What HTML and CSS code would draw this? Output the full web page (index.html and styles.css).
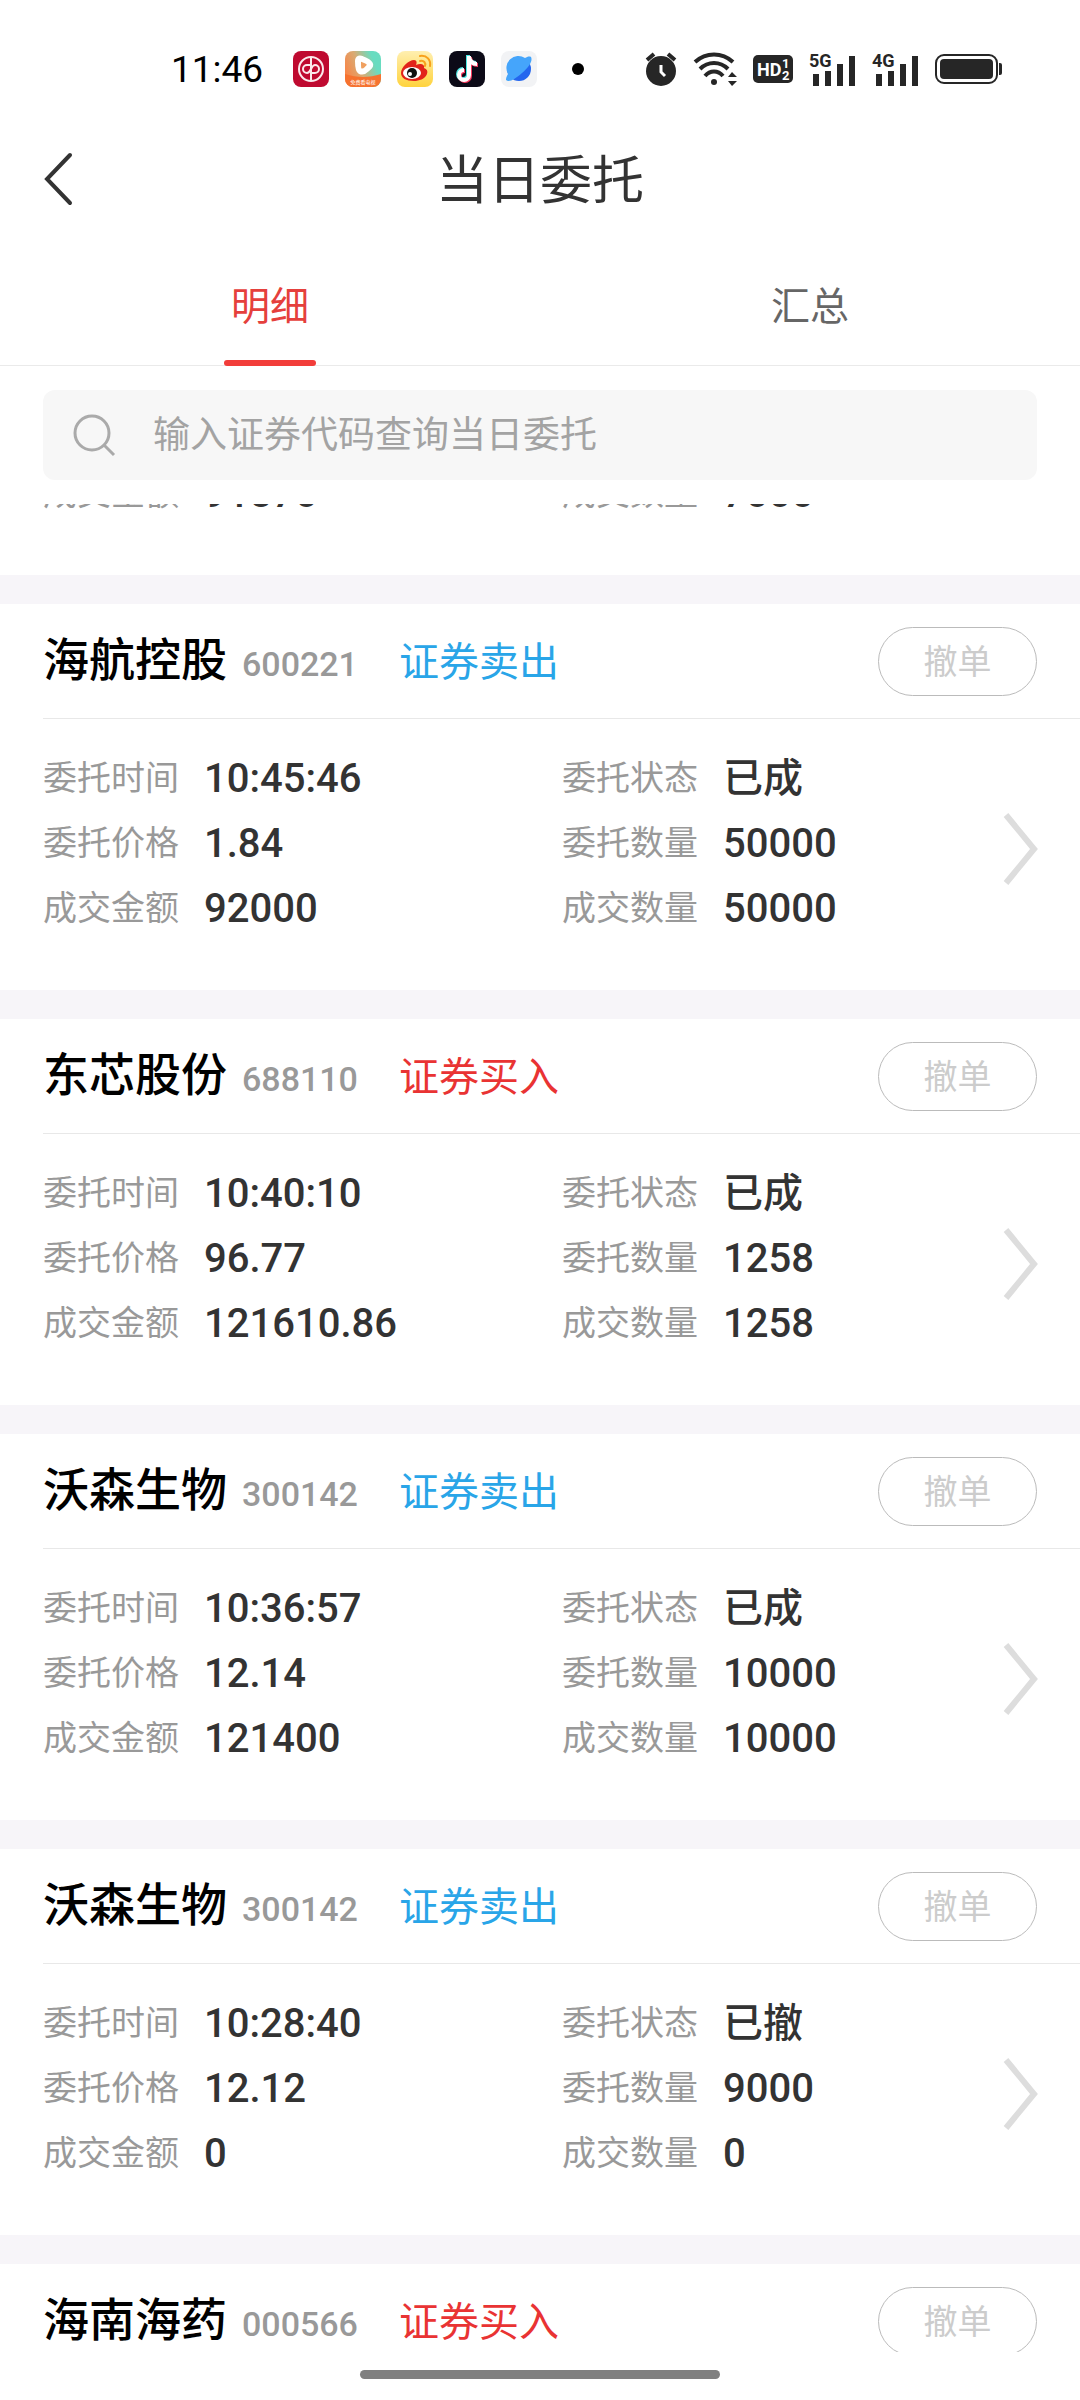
FILE: index.html
```html
<!DOCTYPE html>
<html lang="zh-CN">

<head>
    <meta charset="UTF-8">
    <meta name="viewport" content="width=device-width, initial-scale=1.0">
    <title>当日委托</title>
    <link rel="stylesheet" href="styles.css">
</head>

<body>
    <!-- 状态栏 -->
    <div class="status">
        <span class="time">11:46</span>
        <div class="apps">
            <svg width="36" height="36" viewBox="0 0 36 36">
                <rect width="36" height="36" rx="8" fill="#bf0a30"/>
                <g fill="none" stroke="#fbe9ec" stroke-width="2">
                    <circle cx="18" cy="18" r="12"/>
                    <path d="M18 6v16M18 14v16"/>
                    <path d="M18 14h-4a4 4 0 0 0 0 8c4 0 4-8 8-8a4 4 0 0 1 0 8h-4"/>
                </g>
            </svg>
            <svg width="36" height="36" viewBox="0 0 36 36">
                <defs>
                    <linearGradient id="video" x1="0" y1="0.6" x2="1" y2="0.2">
                        <stop offset="0" stop-color="#f98446"/>
                        <stop offset="0.4" stop-color="#d9ab74"/>
                        <stop offset="0.8" stop-color="#69dcc0"/>
                    </linearGradient>
                    <clipPath id="round"><rect width="36" height="36" rx="8"/></clipPath>
                </defs>
                <g clip-path="url(#round)">
                    <rect width="36" height="36" fill="url(#video)"/>
                    <path d="M0 23c12 4 24 4 36 0v13H0z" fill="#f6722f"/>
                    <path d="M13 10c0-3 2-3 4-2 3 1 7 3 8 5s-1 3-3 5-5 3-7 2-2-6-2-10z" fill="#f0a060" stroke="#fff" stroke-width="6" stroke-linejoin="round"/>
                    <text x="18" y="33" class="tiny">免费看电视</text>
                </g>
            </svg>
            <svg width="36" height="36" viewBox="0 0 36 36">
                <defs>
                    <linearGradient id="weibo" x1="0" y1="0" x2="0" y2="1">
                        <stop offset="0" stop-color="#ffefb0"/>
                        <stop offset="1" stop-color="#ffd33d"/>
                    </linearGradient>
                </defs>
                <rect width="36" height="36" rx="8" fill="url(#weibo)"/>
                <path d="M4 22c0-6 8-13 13-13 3 0 3 3 2 5 4-2 9-1 8 3 3 1 4 3 3 6-2 5-8 7-13 7C9 30 4 27 4 22z" fill="#e2231a"/>
                <ellipse cx="15" cy="22" rx="9" ry="6" fill="#fff"/>
                <circle cx="15" cy="22" r="5" fill="#111"/>
                <circle cx="13" cy="23" r="2" fill="#fff"/>
                <path d="M23 10c4-1 6 2 5 5M23 5c7-1 11 4 10 10" fill="none" stroke="#f8a11c" stroke-width="2" stroke-linecap="round"/>
            </svg>
            <svg width="36" height="36" viewBox="0 0 36 36">
                <rect width="36" height="36" rx="8" fill="#0c0a17"/>
                <g fill="none" stroke-width="4">
                    <path d="M19 4v19a5 5 0 1 1-5-5M19 5c1 5 4 7 8 7" stroke="#4be7e3"/>
                    <path d="M21 6v19a5 5 0 1 1-5-5M21 7c1 5 4 7 8 7" stroke="#f8385c"/>
                    <path d="M20 5v19a5 5 0 1 1-5-5M20 6c1 5 4 7 8 7" stroke="#fff"/>
                </g>
            </svg>
            <svg width="36" height="36" viewBox="0 0 36 36">
                <rect width="36" height="36" rx="8" fill="#f2f3f5"/>
                <circle cx="18" cy="18" r="12" fill="#2466ee"/>
                <path d="M30 6c2 4-2 10-9 16S8 32 5 29c0-3 1-4 2-6A12 12 0 0 1 24 7c2-1 4-2 6-1z" fill="#45a5fb"/>
            </svg>
        </div>
        <span class="dot"></span>
        <div class="signals">
            <svg width="32" height="34" viewBox="0 0 32 34">
                <circle cx="16" cy="19" r="15"/>
                <path d="M2 8l7-6M30 8l-7-6" stroke="#262626" stroke-width="4"/>
                <path d="M16 13v7l4 4" fill="none" stroke="#fff" stroke-width="3"/>
            </svg>
            <svg width="44" height="34" viewBox="0 0 44 34">
                <g fill="none" stroke="#262626" stroke-width="4">
                    <path d="M2 10c11-10 27-10 38 0"/>
                    <path d="M7 17c8-8 20-8 28 0"/>
                    <path d="M12 24c5-6 13-6 18 0"/>
                </g>
                <circle cx="21" cy="30" r="3"/>
                <path d="M35 25l4-5 5 5zM35 29l4 5 5-5z"/>
            </svg>
            <svg width="40" height="28" viewBox="0 0 40 28">
                <rect width="40" height="28" rx="5"/>
                <text x="4" y="21" class="hd">HD</text>
                <text x="29" y="13" class="sim">1</text>
                <text x="29" y="25" class="sim">2</text>
            </svg>
            <svg width="47" height="34" viewBox="0 0 47 34">
                <path d="M4 22h6v12H4zM16 19h6v15h-6zM28 12h6v22h-6zM40 4h6v30h-6z"/>
                <text x="0" y="15" class="net">5G</text>
            </svg>
            <svg width="47" height="34" viewBox="0 0 47 34">
                <path d="M4 22h6v12H4zM16 19h6v15h-6zM28 12h6v22h-6zM40 4h6v30h-6z"/>
                <text x="0" y="15" class="net">4G</text>
            </svg>
            <svg width="67" height="30" viewBox="0 0 67 30">
                <rect x="1" y="1" width="61" height="28" rx="8" fill="none" stroke="#262626" stroke-width="2"/>
                <rect x="5" y="5" width="53" height="20" rx="4"/>
                <path d="M64 9h1a2 2 0 0 1 2 2v8a2 2 0 0 1-2 2h-1z"/>
            </svg>
        </div>
    </div>

    <header class="header">
        <button class="back" type="button" aria-label="返回">
            <svg width="29" height="54" viewBox="0 0 29 54">
                <path d="M27 2L4 26l23 24" fill="none" stroke="#333" stroke-width="4" stroke-linecap="round"/>
            </svg>
        </button>
        <h1>当日委托</h1>
    </header>

    <nav class="tabs">
        <a href="#detail" class="active">明细</a>
        <a href="#summary">汇总</a>
    </nav>

    <label class="search">
        <svg width="42" height="42" viewBox="0 0 42 42" fill="none" stroke="#aaa" stroke-width="3">
            <circle cx="19" cy="19" r="17"/>
            <path d="M31 31l10 10"/>
        </svg>
        <input type="text" placeholder="输入证券代码查询当日委托" aria-label="证券代码">
    </label>

    <!-- 委托列表 -->
    <main class="list" id="detail">
        <section class="card scrolled">
            <dl class="rows">
                <div><dt>成交金额</dt><dd>91870</dd></div>
                <div><dt>成交数量</dt><dd>7000</dd></div>
            </dl>
        </section>

        <section class="card">
            <div class="title">
                <h2>海航控股</h2>
                <span class="code">600221</span>
                <span class="sell">证券卖出</span>
                <button class="cancel" type="button" disabled>撤单</button>
            </div>
            <dl class="rows">
                <div><dt>委托时间</dt><dd>10:45:46</dd></div>
                <div><dt>委托状态</dt><dd>已成</dd></div>
                <div><dt>委托价格</dt><dd>1.84</dd></div>
                <div><dt>委托数量</dt><dd>50000</dd></div>
                <div><dt>成交金额</dt><dd>92000</dd></div>
                <div><dt>成交数量</dt><dd>50000</dd></div>
            </dl>
            <svg class="arrow" viewBox="0 0 32 70"><path d="M1 1l28 34L1 69"/></svg>
        </section>

        <section class="card">
            <div class="title">
                <h2>东芯股份</h2>
                <span class="code">688110</span>
                <span class="buy">证券买入</span>
                <button class="cancel" type="button" disabled>撤单</button>
            </div>
            <dl class="rows">
                <div><dt>委托时间</dt><dd>10:40:10</dd></div>
                <div><dt>委托状态</dt><dd>已成</dd></div>
                <div><dt>委托价格</dt><dd>96.77</dd></div>
                <div><dt>委托数量</dt><dd>1258</dd></div>
                <div><dt>成交金额</dt><dd>121610.86</dd></div>
                <div><dt>成交数量</dt><dd>1258</dd></div>
            </dl>
            <svg class="arrow" viewBox="0 0 32 70"><path d="M1 1l28 34L1 69"/></svg>
        </section>

        <section class="card">
            <div class="title">
                <h2>沃森生物</h2>
                <span class="code">300142</span>
                <span class="sell">证券卖出</span>
                <button class="cancel" type="button" disabled>撤单</button>
            </div>
            <dl class="rows">
                <div><dt>委托时间</dt><dd>10:36:57</dd></div>
                <div><dt>委托状态</dt><dd>已成</dd></div>
                <div><dt>委托价格</dt><dd>12.14</dd></div>
                <div><dt>委托数量</dt><dd>10000</dd></div>
                <div><dt>成交金额</dt><dd>121400</dd></div>
                <div><dt>成交数量</dt><dd>10000</dd></div>
            </dl>
            <svg class="arrow" viewBox="0 0 32 70"><path d="M1 1l28 34L1 69"/></svg>
        </section>

        <section class="card">
            <div class="title">
                <h2>沃森生物</h2>
                <span class="code">300142</span>
                <span class="sell">证券卖出</span>
                <button class="cancel" type="button" disabled>撤单</button>
            </div>
            <dl class="rows">
                <div><dt>委托时间</dt><dd>10:28:40</dd></div>
                <div><dt>委托状态</dt><dd>已撤</dd></div>
                <div><dt>委托价格</dt><dd>12.12</dd></div>
                <div><dt>委托数量</dt><dd>9000</dd></div>
                <div><dt>成交金额</dt><dd>0</dd></div>
                <div><dt>成交数量</dt><dd>0</dd></div>
            </dl>
            <svg class="arrow" viewBox="0 0 32 70"><path d="M1 1l28 34L1 69"/></svg>
        </section>

        <section class="card">
            <div class="title">
                <h2>海南海药</h2>
                <span class="code">000566</span>
                <span class="buy">证券买入</span>
                <button class="cancel" type="button" disabled>撤单</button>
            </div>
        </section>
    </main>

    <div class="home"></div>
</body>

</html>
```
FILE: styles.css
```css
* {
    box-sizing: border-box;
    margin: 0;
    padding: 0;
}

body {
    display: flex;
    flex-direction: column;
    height: 100vh;
    background: #fff;
    color: #333;
    font-family: Roboto, "Noto Sans CJK SC", sans-serif;
}

button,
input {
    border: none;
    background: none;
    font-family: inherit;
}

svg {
    display: block;
    flex: none;
    overflow: visible;
}

/* 状态栏 */
.status {
    display: flex;
    flex: none;
    align-items: center;
    height: 138px;
    padding: 0 78px 0 171px;
}

.time {
    width: 122px;
    color: #000;
    font-size: 37px;
}

.apps {
    display: flex;
    gap: 16px;
}

.dot {
    width: 12px;
    height: 12px;
    margin-left: 35px;
    border-radius: 50%;
    background: #000;
}

.signals {
    display: flex;
    align-items: center;
    gap: 16px;
    margin-left: auto;
    fill: #262626;
}

.tiny {
    fill: #fff;
    font-size: 5px;
    text-anchor: middle;
}

.hd,
.sim,
.net {
    font-weight: bold;
}

.hd {
    fill: #fff;
    font-size: 18px;
}

.sim {
    fill: #fff;
    font-size: 13px;
}

.net {
    font-size: 18px;
}

/* 标题 */
.header {
    display: grid;
    flex: none;
    grid-template-columns: 1fr auto 1fr;
    align-items: center;
    height: 84px;
    padding: 0 43px;
}

.back {
    width: 29px;
}

.header h1 {
    padding-top: 4px;
    font-size: 52px;
    font-weight: normal;
    line-height: 80px;
}

.tabs {
    display: flex;
    flex: none;
    justify-content: space-around;
    height: 144px;
    border-bottom: 1px solid #eaeaea;
}

.tabs a {
    display: flex;
    width: 92px;
    justify-content: center;
    padding-top: 56px;
    color: #666;
    font-size: 39px;
    line-height: 58px;
    text-decoration: none;
}

.tabs .active {
    position: relative;
    color: #e5403c;
}

.tabs .active::after {
    content: "";
    position: absolute;
    right: 0;
    bottom: -1px;
    left: 0;
    height: 6px;
    border-radius: 3px;
    background: #f23d3a;
}

.search {
    display: flex;
    flex: none;
    align-items: center;
    height: 90px;
    margin: 24px 43px;
    padding: 0 30px;
    gap: 38px;
    border-radius: 12px;
    background: #f7f7f7;
}

.search input {
    flex: 1;
    font-size: 37px;
}

.search input::placeholder {
    color: #a3a3a3;
}

/* 列表 */
.list {
    flex: 1;
    min-height: 0;
    overflow: hidden;
}

.card {
    position: relative;
    border-bottom: 29px solid #f7f5f9;
}

.scrolled {
    margin-top: -70px;
}

.title {
    display: flex;
    align-items: baseline;
    height: 115px;
    margin-left: 43px;
    padding-right: 43px;
    border-bottom: 1px solid #e8e8e8;
    line-height: 112px;
}

.title h2 {
    color: #000;
    font-size: 46px;
    font-weight: 500;
}

.code {
    margin: 0 41px 0 15px;
    color: #999;
    font-size: 34px;
    font-weight: 500;
}

.sell,
.buy {
    font-size: 40px;
}

.sell {
    color: #29a5e8;
}

.buy {
    color: #e93333;
}

.cancel {
    align-self: center;
    width: 159px;
    height: 69px;
    margin-left: auto;
    padding-bottom: 4px;
    border: 1px solid #bbb;
    border-radius: 35px;
    color: #ccc;
    font-size: 34px;
}

.rows {
    display: grid;
    grid-template-columns: 519px 1fr;
    padding: 27px 43px 49px;
    line-height: 65px;
}

.rows div {
    display: flex;
}

.rows dt {
    width: 161px;
    color: #999;
    font-size: 34px;
}

.rows dd {
    font-size: 40px;
    font-weight: 500;
}

.arrow {
    position: absolute;
    right: 43px;
    bottom: 106px;
    width: 32px;
    height: 70px;
    fill: none;
    stroke: #ddd;
    stroke-width: 6;
}

.home {
    flex: none;
    width: calc(100% / 3);
    height: 9px;
    margin: 18px auto 21px;
    border-radius: 5px;
    background: #808080;
}
```
